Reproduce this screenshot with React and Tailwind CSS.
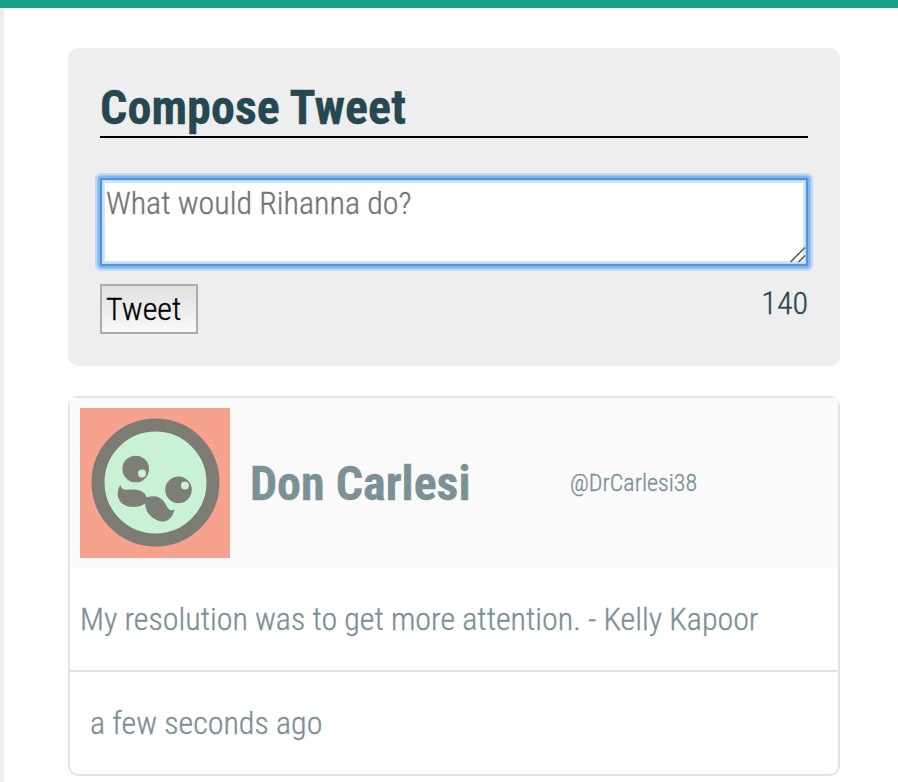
export default function App() {
  return (
    <div className="flex h-[782px] w-[898px] flex-col overflow-hidden border-t-8 border-[#18a086] bg-white font-['Roboto_Condensed','Roboto',sans-serif] text-[32px] font-light leading-[38px] text-[#264850] [-webkit-text-stroke:0.35px]">
      <div className="flex h-[774px]">
        <div className="w-1 shrink-0 bg-[#eeeeee]" />
        <main className="ml-16 mt-10 w-[772px] shrink-0">
          <section className="h-[318px] rounded-[10px] bg-[#eeeeee] px-8 pt-8">
            <h2 className="h-[58px] border-b-2 border-black text-[48px] font-bold leading-[56px] tracking-[0.08px]">Compose Tweet</h2>
            <div className="relative mt-10 h-[88px] rounded-[2px] bg-[#80b6f2] shadow-[0_0_0_2px_#80b6f2,0_0_0_3px_#9dc6f4,0_0_0_5px_#bed8f5]">
              <textarea
                placeholder="What would Rihanna do?"
                className="block h-[88px] w-[708px] resize-none border-2 border-[#5794d6] bg-white px-1 pb-0 pt-1 leading-[38px] shadow-[inset_0_0_0_1px_#b9d7fa,inset_0_0_0_3px_#d0e4fc] outline-none placeholder:text-[#757575]"
              />
              <svg className="absolute bottom-[3px] right-[2px]" width="17" height="17" viewBox="0 0 17 17" fill="none" stroke="#5c5c5c" strokeWidth="1.6">
                <path d="M1.500 16L16 1.500M9.500 16L16 9.500" />
              </svg>
            </div>
            <div className="flex justify-between">
              <button className="mt-[18px] h-[50px] w-[98px] border-2 border-[#acacac] bg-linear-to-b from-[#e1e1e1] to-[#f8f8f8] pl-1 text-left leading-[46px] text-black">Tweet</button>
              <span className="mt-[18px]">140</span>
            </div>
          </section>

          <article className="mt-[30px] h-[380px] rounded-[10px] border-2 border-[#e3e3e3] text-[#7c9196]">
            <header className="flex h-[170px] items-center bg-[#fafafa] pl-[10px]">
              <svg width="150" height="150" viewBox="0 0 150 150" className="shrink-0">
                <rect width="150" height="150" fill="#f7a28e" />
                <circle cx="75.5" cy="74.5" r="57.5" fill="#c9f1d5" stroke="#7c7c75" strokeWidth="13" />
                <g fill="#7e7e78">
                  <circle cx="55.7" cy="61" r="13.3" />
                  <circle cx="98.5" cy="81.8" r="13.3" />
                  <path d="M40.500 77C41.500 82 45 82 50 81.500C58 80.800 65 83 66.800 89.500C73 87 79 88 83 92.500C88 99 88 104 94.500 101.500C92.500 109 89 114 81 113.500C72 111.500 65 104 65.200 95.500C58 100.500 48 100 42 95.500C36 90 37 81 40.500 77Z" />
                </g>
                <circle cx="62" cy="65.500" r="4" fill="#c9f1d5" />
                <circle cx="105" cy="77.500" r="4" fill="#c9f1d5" />
              </svg>
              <h3 className="ml-5 mt-[2px] w-[320px] text-[48px] font-bold leading-[56px]">Don Carlesi</h3>
              <span className="text-[24px] leading-[30px]">@DrCarlesi38</span>
            </header>
            <p className="flex h-[102px] items-center whitespace-nowrap pl-[10px] tracking-[-0.01px]">My resolution was to get more attention. - Kelly Kapoor</p>
            <footer className="flex h-[104px] items-center border-t-2 border-[#e3e3e3] pl-5">a few seconds ago</footer>
          </article>
        </main>
      </div>
    </div>
  );
}
